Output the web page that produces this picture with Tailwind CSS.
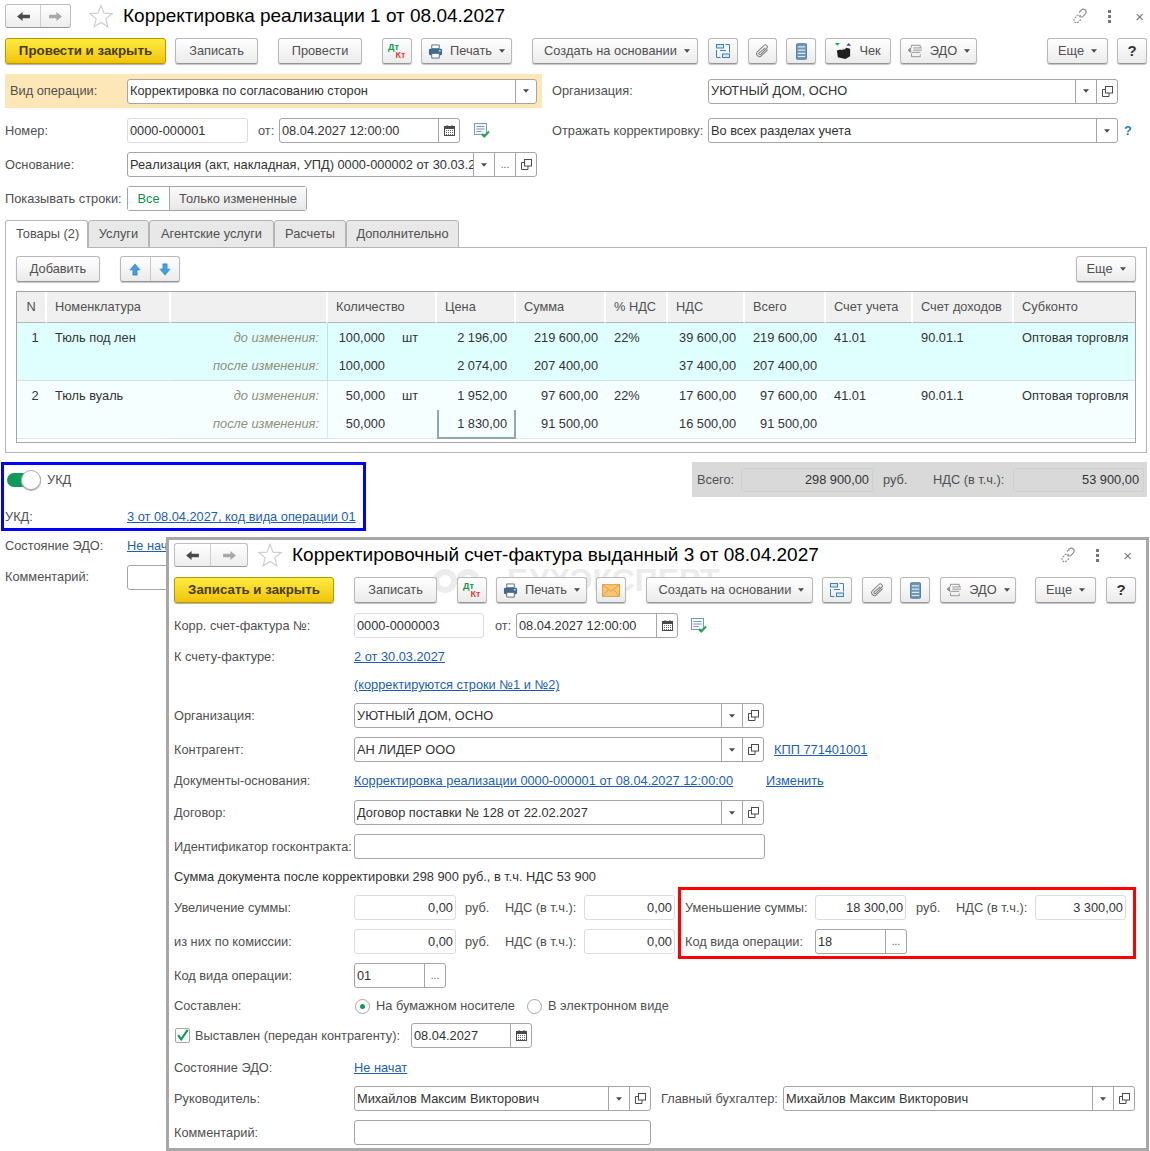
<!DOCTYPE html>
<html lang="ru">

<head>
    <meta charset="UTF-8">
    <meta name="viewport" content="width=device-width, initial-scale=1.0">
    <script src="https://cdn.jsdelivr.net/npm/@tailwindcss/browser@4"></script>
    <title>Корректировка реализации</title>
</head>

<body class="bg-white">
    <!-- icon sprite -->
    <svg class="hidden">
        <symbol id="back" viewBox="0 0 16 12"><path d="M1 6l6-5v3h8v4H7v3z" fill="#4a4a4a"/></symbol>
        <symbol id="forward" viewBox="0 0 16 12"><path d="M15 6L9 1v3H1v4h8v3z" fill="#a8a8a8"/></symbol>
        <symbol id="star" viewBox="0 0 24 24"><path d="M12 1.500l3 7.600 8.200.5-6.400 5.200 2.100 8-6.900-4.400-6.900 4.400 2.100-8L.8 9.600 9 9.100z" fill="#fff" stroke="#cfcfcf" stroke-width="1.200"/></symbol>
        <symbol id="printer" viewBox="0 0 16 16"><path d="M4 1h8v4H4z" fill="#fff" stroke="#4f6d86"/><rect x="1" y="5" width="14" height="7" rx="1.500" fill="#3f6a8c"/><path d="M4 10h8v5H4z" fill="#fff" stroke="#4f6d86"/><rect x="11.500" y="6.500" width="2" height="1.500" fill="#cfe0ec"/></symbol>
        <symbol id="struct" viewBox="0 0 16 16" fill="none" stroke="#3f83b5"><rect x="1.500" y="1.500" width="7" height="3.500" fill="#d7e8f4"/><rect x="7.500" y="11" width="7" height="3.500" fill="#d7e8f4"/><path d="M10.500 1.500h4v8M1.500 7v7.500h4M5 7.500h6"/></symbol>
        <symbol id="clip" viewBox="0 0 16 16" fill="none" stroke="#808080" stroke-width="1.100"><path d="M13.500 6L7 12.500a3 3 0 0 1-4.300-4.300L9.500 1.600a2.100 2.100 0 0 1 3 3L6 11a1 1 0 0 1-1.500-1.500L11 4"/></symbol>
        <symbol id="list" viewBox="0 0 12 18"><rect x=".5" y=".5" width="11" height="17" rx="1" fill="#6f97b8" stroke="#4f7697"/><path d="M2 4h8M2 7.500h8M2 11h8M2 14.500h8" stroke="#dbe8f2" stroke-width="1.200"/></symbol>
        <symbol id="cheque" viewBox="0 0 18 18"><path d="M0 0h5L2.500 3z" fill="#11a65a"/><path d="M12 3h5l-2.500-3z" fill="#3349a8"/><path d="M2 8l10-3 4 1v8l-5 3-8-2z" fill="#1f1f1f"/><path d="M5 6.500l5-1.500 2 1-5 1.500z" fill="#e8e8e8"/></symbol>
        <symbol id="edo" viewBox="0 0 18 16" fill="none" stroke="#8a8a8a"><path d="M5 1.500h10v3M5 1.500V4M5 11v3.500h10V12M7 4.500h10M7 7h10M5 9.500h10"/><path d="M1 7l3-2.500v5z" fill="#8a8a8a"/></symbol>
        <symbol id="mail" viewBox="0 0 20 14"><rect x=".5" y=".5" width="19" height="13" fill="#f7c673" stroke="#d99a3d"/><path d="M.5.5L10 8l9.500-7.500M.5 13.500l6.500-7.500M19.500 13.500L13 6" fill="none" stroke="#d99a3d"/></symbol>
        <symbol id="chain" viewBox="0 0 16 16" fill="none" stroke="#8c8c8c" stroke-width="1.100"><path d="M7 4.500l2.500-2.500c1.500-1.400 3.100-.7 3.800 0s1.300 2.400 0 3.800L11 8.300c-1.400 1.300-3 .8-3.800-.4"/><path d="M9 11.500L6.500 14c-1.500 1.400-3.100.7-3.800 0s-1.300-2.400 0-3.800L5 7.700c1.400-1.300 3-.8 3.800.4" stroke-dasharray="2 1"/></symbol>
        <symbol id="cal" viewBox="0 0 11 11"><rect x=".5" y="1.500" width="10" height="9" fill="#fff" stroke="#4a4a4a"/><rect x="1" y="2" width="9" height="2" fill="#4a4a4a"/><path d="M3 0v2M8 0v2" stroke="#4a4a4a"/><path d="M2 5.500h7M2 7.500h7M2 9.500h7" stroke="#6a6a6a" stroke-dasharray="1 1"/></symbol>
        <symbol id="open" viewBox="0 0 11 11" fill="none" stroke="#4a4a4a"><rect x="3.500" y=".5" width="7" height="6.500"/><path d="M3.500 3.500H.5v7h6.500V7"/></symbol>
        <symbol id="note" viewBox="0 0 16 15"><rect x=".5" y=".5" width="12" height="11" fill="#f3f7fa" stroke="#7f9bb0"/><path d="M2.500 3.500h8M2.500 6h8M2.500 8.500h5" stroke="#7f9bb0"/><path d="M8 11l2.200 2.500L15 8.500" fill="none" stroke="#22a34a" stroke-width="2"/></symbol>
        <symbol id="up" viewBox="0 0 13 15"><path d="M6.500 1L12.500 8H9v6H4V8H.5z" fill="#3f9fe0" stroke="#2f7db5" stroke-width=".6"/></symbol>
        <symbol id="down" viewBox="0 0 13 15"><path d="M6.500 14L12.500 7H9V1H4v6H.5z" fill="#3f9fe0" stroke="#2f7db5" stroke-width=".6"/></symbol>
        <symbol id="dd" viewBox="0 0 7 4"><path d="M0 0h7L3.500 4z" fill="#4a4a4a"/></symbol>
    </svg>

    <div class="relative w-[1150px] h-[1151px] overflow-hidden bg-white text-[12.8px] whitespace-nowrap text-[#505050] font-['Liberation_Sans',Arial,sans-serif]">

        <!-- Main document -->
        <div class="pt-[4px] pl-[5px]">
            <div class="flex items-center w-[1139px] h-[24px]">
                <div class="flex w-[66px] h-[24px] rounded-[3px] border border-[#bdbdbd] border-b-[#969696] bg-linear-to-b from-white to-[#ededed]">
                    <div class="flex-1 flex items-center justify-center border-r border-[#cfcfcf]"><svg class="w-[15px] h-[11px]"><use href="#back"/></svg></div>
                    <div class="w-[29px] flex items-center justify-center"><svg class="w-[15px] h-[11px]"><use href="#forward"/></svg></div>
                </div>
                <svg class="ml-[18px] w-[24px] h-[24px]"><use href="#star"/></svg>
                <h1 class="ml-[10px] text-[19px] leading-[24px] text-black">Корректировка реализации 1 от 08.04.2027</h1>
                <svg class="ml-auto w-[16px] h-[16px]"><use href="#chain"/></svg>
                <div class="ml-[20px] flex flex-col gap-[2px]"><i class="block w-[3px] h-[3px] bg-[#777]"></i><i class="block w-[3px] h-[3px] bg-[#777]"></i><i class="block w-[3px] h-[3px] bg-[#777]"></i></div>
                <span class="ml-[24px] text-[15px] leading-none text-[#777]">×</span>
            </div>

            <div class="flex mt-[10px] h-[26px]">
                <button class="w-[161px] rounded-[3px] border border-[#b59700] bg-linear-to-b from-[#ffec3d] to-[#f0c400] shadow-[0_1px_1px_#b0b0b0] text-[13.3px] font-bold text-[#4a3b00]">Провести и закрыть</button>
                <button class="ml-[9px] w-[83px] rounded-[3px] border border-[#b9b9b9] border-b-[#969696] bg-linear-to-b from-white to-[#ebebeb] shadow-[0_1px_1px_#c4c4c4]">Записать</button>
                <button class="ml-[20px] w-[84px] rounded-[3px] border border-[#b9b9b9] border-b-[#969696] bg-linear-to-b from-white to-[#ebebeb] shadow-[0_1px_1px_#c4c4c4]">Провести</button>
                <button class="ml-[20px] w-[30px] rounded-[3px] border border-[#b9b9b9] border-b-[#969696] bg-linear-to-b from-white to-[#ebebeb] shadow-[0_1px_1px_#c4c4c4] text-[9px] leading-[8px] font-bold"><span class="block pr-[7px] text-[#11984f]">Дт</span><span class="block pl-[7px] text-[#e04040]">Кт</span></button>
                <button class="ml-[9px] w-[91px] flex items-center justify-center gap-[7px] rounded-[3px] border border-[#b9b9b9] border-b-[#969696] bg-linear-to-b from-white to-[#ebebeb] shadow-[0_1px_1px_#c4c4c4]"><svg class="w-[15px] h-[15px]"><use href="#printer"/></svg>Печать<svg class="w-[6px] h-[4px]"><use href="#dd"/></svg></button>
                <button class="ml-[20px] w-[166px] pl-[4px] flex items-center justify-center gap-[7px] rounded-[3px] border border-[#b9b9b9] border-b-[#969696] bg-linear-to-b from-white to-[#ebebeb] shadow-[0_1px_1px_#c4c4c4]">Создать на основании<svg class="w-[6px] h-[4px]"><use href="#dd"/></svg></button>
                <button class="ml-[10px] w-[30px] flex items-center justify-center rounded-[3px] border border-[#b9b9b9] border-b-[#969696] bg-linear-to-b from-white to-[#ebebeb] shadow-[0_1px_1px_#c4c4c4]"><svg class="w-[16px] h-[16px]"><use href="#struct"/></svg></button>
                <button class="ml-[10px] w-[29px] flex items-center justify-center rounded-[3px] border border-[#b9b9b9] border-b-[#969696] bg-linear-to-b from-white to-[#ebebeb] shadow-[0_1px_1px_#c4c4c4]"><svg class="w-[15px] h-[15px]"><use href="#clip"/></svg></button>
                <button class="ml-[9px] w-[30px] flex items-center justify-center rounded-[3px] border border-[#b9b9b9] border-b-[#969696] bg-linear-to-b from-white to-[#ebebeb] shadow-[0_1px_1px_#c4c4c4]"><svg class="w-[11px] h-[17px]"><use href="#list"/></svg></button>
                <button class="ml-[9px] w-[66px] flex items-center justify-center gap-[7px] rounded-[3px] border border-[#b9b9b9] border-b-[#969696] bg-linear-to-b from-white to-[#ebebeb] shadow-[0_1px_1px_#c4c4c4]"><svg class="w-[17px] h-[17px]"><use href="#cheque"/></svg>Чек</button>
                <button class="ml-[9px] w-[77px] flex items-center justify-center gap-[7px] rounded-[3px] border border-[#b9b9b9] border-b-[#969696] bg-linear-to-b from-white to-[#ebebeb] shadow-[0_1px_1px_#c4c4c4]"><svg class="w-[16px] h-[14px]"><use href="#edo"/></svg>ЭДО<svg class="w-[6px] h-[4px]"><use href="#dd"/></svg></button>
                <button class="ml-[70px] w-[61px] flex items-center justify-center gap-[7px] rounded-[3px] border border-[#b9b9b9] border-b-[#969696] bg-linear-to-b from-white to-[#ebebeb] shadow-[0_1px_1px_#c4c4c4]">Еще<svg class="w-[6px] h-[4px]"><use href="#dd"/></svg></button>
                <button class="ml-[9px] w-[30px] rounded-[3px] border border-[#b9b9b9] border-b-[#969696] bg-linear-to-b from-white to-[#ebebeb] shadow-[0_1px_1px_#c4c4c4] text-[15px] font-bold text-[#333]">?</button>
            </div>

            <div class="flex items-center mt-[10px] h-[34px]">
                <div class="flex items-center w-[537px] h-[34px] bg-[#fde7b6] pl-[5px]">
                    <span class="w-[117px]">Вид операции:</span>
                    <div class="flex w-[410px] h-[25px] bg-white rounded-[3px] border border-[#a5a5a5]">
                        <input class="flex-1 min-w-0 pl-[2px] text-[#333]" value="Корректировка по согласованию сторон">
                        <span class="w-[21px] flex items-center justify-center border-l border-[#a5a5a5]"><svg class="w-[6px] h-[4px]"><use href="#dd"/></svg></span>
                    </div>
                </div>
                <span class="ml-[10px] w-[156px]">Организация:</span>
                <div class="flex w-[410px] h-[25px] rounded-[3px] border border-[#a5a5a5]">
                    <input class="flex-1 min-w-0 pl-[2px] text-[#333]" value="УЮТНЫЙ ДОМ, ОСНО">
                    <span class="w-[21px] flex items-center justify-center border-l border-[#a5a5a5]"><svg class="w-[6px] h-[4px]"><use href="#dd"/></svg></span>
                    <span class="w-[21px] flex items-center justify-center border-l border-[#a5a5a5]"><svg class="w-[11px] h-[11px]"><use href="#open"/></svg></span>
                </div>
            </div>

            <div class="flex items-center mt-[10px] h-[25px]">
                <span class="w-[122px]">Номер:</span>
                <input class="w-[121px] h-[25px] pl-[2px] rounded-[3px] border border-[#dcdcdc] text-[#333]" value="0000-000001">
                <span class="ml-[10px] w-[21px]">от:</span>
                <div class="flex w-[181px] h-[25px] rounded-[3px] border border-[#a5a5a5]">
                    <input class="flex-1 min-w-0 pl-[2px] text-[#333]" value="08.04.2027 12:00:00">
                    <span class="w-[21px] flex items-center justify-center border-l border-[#a5a5a5]"><svg class="w-[11px] h-[11px]"><use href="#cal"/></svg></span>
                </div>
                <svg class="ml-[14px] w-[16px] h-[15px]"><use href="#note"/></svg>
                <span class="ml-[62px] w-[156px]">Отражать корректировку:</span>
                <div class="flex w-[410px] h-[25px] rounded-[3px] border border-[#a5a5a5]">
                    <input class="flex-1 min-w-0 pl-[2px] text-[#333]" value="Во всех разделах учета">
                    <span class="w-[21px] flex items-center justify-center border-l border-[#a5a5a5]"><svg class="w-[6px] h-[4px]"><use href="#dd"/></svg></span>
                </div>
                <span class="ml-[6px] font-bold text-[#1a82c4]">?</span>
            </div>

            <div class="flex items-center mt-[9px] h-[25px]">
                <span class="w-[122px]">Основание:</span>
                <div class="flex w-[410px] h-[25px] rounded-[3px] border border-[#a5a5a5]">
                    <input class="flex-1 min-w-0 pl-[2px] text-[#333]" value="Реализация (акт, накладная, УПД) 0000-000002 от 30.03.2027">
                    <span class="w-[21px] flex items-center justify-center border-l border-[#a5a5a5]"><svg class="w-[6px] h-[4px]"><use href="#dd"/></svg></span>
                    <span class="w-[21px] flex items-center justify-center border-l border-[#a5a5a5] text-[10px]">...</span>
                    <span class="w-[21px] flex items-center justify-center border-l border-[#a5a5a5]"><svg class="w-[11px] h-[11px]"><use href="#open"/></svg></span>
                </div>
            </div>

            <div class="flex items-center mt-[9px] h-[25px]">
                <span class="w-[122px]">Показывать строки:</span>
                <div class="flex h-[25px] rounded-[3px] border border-[#a5a5a5]">
                    <span class="w-[42px] flex items-center justify-center bg-white text-[#0f9150] border-r border-[#a5a5a5]">Все</span>
                    <span class="w-[136px] flex items-center justify-center bg-linear-to-b from-[#fafafa] to-[#e8e8e8]">Только измененные</span>
                </div>
            </div>

            <!-- Tabs -->
            <div class="relative z-10 flex mt-[9px] h-[28px] -mb-px">
                <div class="w-[83px] pl-[10px] pb-[1px] flex items-center rounded-t-[3px] border border-b-0 border-[#b5b5b5] bg-white">Товары (2)</div>
                <div class="w-[61px] flex items-center justify-center rounded-t-[3px] border border-[#b5b5b5] bg-[#e8e8e8]">Услуги</div>
                <div class="w-[125px] flex items-center justify-center rounded-t-[3px] border border-[#b5b5b5] bg-[#e8e8e8]">Агентские услуги</div>
                <div class="w-[72px] flex items-center justify-center rounded-t-[3px] border border-[#b5b5b5] bg-[#e8e8e8]">Расчеты</div>
                <div class="w-[113px] flex items-center justify-center rounded-t-[3px] border border-[#b5b5b5] bg-[#e8e8e8]">Дополнительно</div>
            </div>
            <div class="w-[1142px] h-[206px] border border-[#b5b5b5] px-[10px] pt-[8px]">
                <div class="flex h-[26px]">
                    <button class="w-[84px] rounded-[3px] border border-[#b9b9b9] border-b-[#969696] bg-linear-to-b from-white to-[#ebebeb] shadow-[0_1px_1px_#c4c4c4]">Добавить</button>
                    <div class="ml-[20px] flex w-[60px] rounded-[3px] border border-[#b9b9b9] border-b-[#969696] bg-linear-to-b from-white to-[#ebebeb] shadow-[0_1px_1px_#c4c4c4]">
                        <span class="flex-1 flex items-center justify-center border-r border-[#c8c8c8]"><svg class="w-[12px] h-[13px]"><use href="#up"/></svg></span>
                        <span class="flex-1 flex items-center justify-center"><svg class="w-[12px] h-[13px]"><use href="#down"/></svg></span>
                    </div>
                    <button class="ml-auto w-[60px] flex items-center justify-center gap-[7px] rounded-[3px] border border-[#b9b9b9] border-b-[#969696] bg-linear-to-b from-white to-[#ebebeb] shadow-[0_1px_1px_#c4c4c4]">Еще<svg class="w-[6px] h-[4px]"><use href="#dd"/></svg></button>
                </div>

                <div class="mt-[9px] w-[1120px] h-[152px] border border-[#a5a5a5]">
                    <table class="w-[1118px] table-fixed border-separate border-spacing-0 text-[#333]">
                        <colgroup>
                            <col class="w-[30px]"><col class="w-[124px]"><col class="w-[157px]"><col class="w-[68px]"><col class="w-[41px]"><col class="w-[79px]"><col class="w-[90px]"><col class="w-[62px]"><col class="w-[77px]"><col class="w-[81px]"><col class="w-[87px]"><col class="w-[101px]"><col class="w-[121px]">
                        </colgroup>
                        <thead>
                            <tr class="h-[31px] bg-[#f0f0f0] text-[#505050] text-left">
                                <th class="font-normal text-center border-r-2 border-b border-white border-b-[#b5b5b5]">N</th>
                                <th class="font-normal pl-[8px] border-r-2 border-b border-white border-b-[#b5b5b5]">Номенклатура</th>
                                <th class="border-r-2 border-b border-white border-b-[#b5b5b5]"></th>
                                <th colspan="2" class="font-normal pl-[8px] border-r-2 border-b border-white border-b-[#b5b5b5]">Количество</th>
                                <th class="font-normal pl-[8px] border-r-2 border-b border-white border-b-[#b5b5b5]">Цена</th>
                                <th class="font-normal pl-[8px] border-r-2 border-b border-white border-b-[#b5b5b5]">Сумма</th>
                                <th class="font-normal pl-[8px] border-r-2 border-b border-white border-b-[#b5b5b5]">% НДС</th>
                                <th class="font-normal pl-[8px] border-r-2 border-b border-white border-b-[#b5b5b5]">НДС</th>
                                <th class="font-normal pl-[8px] border-r-2 border-b border-white border-b-[#b5b5b5]">Всего</th>
                                <th class="font-normal pl-[8px] border-r-2 border-b border-white border-b-[#b5b5b5]">Счет учета</th>
                                <th class="font-normal pl-[8px] border-r-2 border-b border-white border-b-[#b5b5b5]">Счет доходов</th>
                                <th class="font-normal pl-[8px] border-b border-b-[#b5b5b5]">Субконто</th>
                            </tr>
                        </thead>
                        <tbody>
                            <tr class="h-[29px] bg-[#dfffff]">
                                <td class="text-center pl-[6px]">1</td>
                                <td class="pl-[8px]">Тюль под лен</td>
                                <td class="pr-[8px] text-right italic text-[#8f8f78] border-r border-[#c4e0e0]">до изменения:</td>
                                <td class="pr-[11px] text-right">100,000</td>
                                <td class="pl-[6px]">шт</td>
                                <td class="pr-[9px] text-right">2 196,00</td>
                                <td class="pr-[8px] text-right">219 600,00</td>
                                <td class="pl-[8px]">22%</td>
                                <td class="pr-[9px] text-right">39 600,00</td>
                                <td class="pr-[9px] text-right">219 600,00</td>
                                <td class="pl-[8px]">41.01</td>
                                <td class="pl-[8px]">90.01.1</td>
                                <td class="pl-[8px]">Оптовая торговля</td>
                            </tr>
                            <tr class="h-[29px] bg-[#dfffff]">
                                <td class="border-b border-[#cfe6e6]"></td>
                                <td class="border-b border-[#cfe6e6]"></td>
                                <td class="pr-[8px] text-right italic text-[#8f8f78] border-r border-b border-[#c4e0e0]">после изменения:</td>
                                <td class="pr-[11px] text-right border-b border-[#cfe6e6]">100,000</td>
                                <td class="border-b border-[#cfe6e6]"></td>
                                <td class="pr-[9px] text-right border-b border-[#cfe6e6]">2 074,00</td>
                                <td class="pr-[8px] text-right border-b border-[#cfe6e6]">207 400,00</td>
                                <td class="border-b border-[#cfe6e6]"></td>
                                <td class="pr-[9px] text-right border-b border-[#cfe6e6]">37 400,00</td>
                                <td class="pr-[9px] text-right border-b border-[#cfe6e6]">207 400,00</td>
                                <td class="border-b border-[#cfe6e6]"></td>
                                <td class="border-b border-[#cfe6e6]"></td>
                                <td class="border-b border-[#cfe6e6]"></td>
                            </tr>
                            <tr class="h-[29px] bg-[#f5ffff]">
                                <td class="text-center pl-[6px]">2</td>
                                <td class="pl-[8px]">Тюль вуаль</td>
                                <td class="pr-[8px] text-right italic text-[#8f8f78] border-r border-[#d5e8e8]">до изменения:</td>
                                <td class="pr-[11px] text-right">50,000</td>
                                <td class="pl-[6px]">шт</td>
                                <td class="pr-[9px] text-right">1 952,00</td>
                                <td class="pr-[8px] text-right">97 600,00</td>
                                <td class="pl-[8px]">22%</td>
                                <td class="pr-[9px] text-right">17 600,00</td>
                                <td class="pr-[9px] text-right">97 600,00</td>
                                <td class="pl-[8px]">41.01</td>
                                <td class="pl-[8px]">90.01.1</td>
                                <td class="pl-[8px]">Оптовая торговля</td>
                            </tr>
                            <tr class="h-[29px] bg-[#f5ffff]">
                                <td class="border-b border-[#dde8e8]"></td>
                                <td class="border-b border-[#dde8e8]"></td>
                                <td class="pr-[8px] text-right italic text-[#8f8f78] border-r border-b border-[#d5e8e8]">после изменения:</td>
                                <td class="pr-[11px] text-right border-b border-[#dde8e8]">50,000</td>
                                <td class="border-b border-[#dde8e8]"></td>
                                <td class="pr-[7px] text-right border-x-2 border-b-2 border-[#8fa8a8]">1 830,00</td>
                                <td class="pr-[8px] text-right border-b border-[#dde8e8]">91 500,00</td>
                                <td class="border-b border-[#dde8e8]"></td>
                                <td class="pr-[9px] text-right border-b border-[#dde8e8]">16 500,00</td>
                                <td class="pr-[9px] text-right border-b border-[#dde8e8]">91 500,00</td>
                                <td class="border-b border-[#dde8e8]"></td>
                                <td class="border-b border-[#dde8e8]"></td>
                                <td class="border-b border-[#dde8e8]"></td>
                            </tr>
                        </tbody>
                    </table>
                </div>
            </div>

            <!-- Footer of main document -->
            <div class="flex mt-[9px]">
                <div class="w-[687px]">
                    <div class="flex items-center h-[34px] pl-[2px] pt-[1px]">
                        <div class="relative w-[34px] h-[14px] rounded-full bg-[#0f9a57]">
                            <span class="absolute right-0 top-[-3px] w-[20px] h-[20px] rounded-full bg-white border border-[#b0b0b0] shadow-[0_1px_1px_#aaa]"></span>
                        </div>
                        <span class="ml-[6px]">УКД</span>
                    </div>
                    <div class="flex items-center mt-[9px] h-[24px]">
                        <span class="w-[122px]">УКД:</span>
                        <a href="#" class="underline text-[#1c5fb4]">3 от 08.04.2027, код вида операции 01</a>
                    </div>
                    <div class="flex items-center mt-[5px] h-[24px]">
                        <span class="w-[122px]">Состояние ЭДО:</span>
                        <a href="#" class="underline text-[#1c5fb4]">Не начат</a>
                    </div>
                    <div class="flex items-center mt-[7px] h-[24px]">
                        <span class="w-[122px]">Комментарий:</span>
                        <input class="w-[300px] h-[25px] rounded-[3px] border border-[#a5a5a5]">
                    </div>
                </div>
                <div class="flex items-center w-[455px] h-[35px] pl-[5px] bg-[#d9d9d9]">
                    <span class="w-[44px]">Всего:</span>
                    <span class="w-[132px] h-[24px] flex items-center justify-end pr-[3px] rounded-[3px] border border-[#d0d0d0] text-[#333]">298 900,00</span>
                    <span class="ml-[10px] w-[50px]">руб.</span>
                    <span class="w-[80px]">НДС (в т.ч.):</span>
                    <span class="w-[131px] h-[24px] flex items-center justify-end pr-[4px] rounded-[3px] border border-[#d0d0d0] text-[#333]">53 900,00</span>
                </div>
            </div>
        </div>

        <!-- Highlight around the UKD block -->
        <div class="absolute left-[1px] top-[462px] w-[365px] h-[69px] border-[3px] border-[#0000ff]"></div>

        <!-- Corrective invoice window -->
        <div class="absolute left-[166px] top-[537px] w-[983px] h-[614px] border-[3px] border-[#a8a8a8] bg-white pt-[3px] pl-[5px]">

            <!-- Watermark behind the toolbar -->
            <div class="absolute left-[264px] top-[23px] flex items-center text-[32px] font-bold leading-none text-[#ececec]">
                <svg class="w-[48px] h-[34px]" viewBox="0 0 48 34" fill="none" stroke="#ececec" stroke-width="6"><circle cx="12" cy="18" r="9"/><circle cx="35" cy="18" r="9"/></svg>
                <span class="ml-[26px]">БУХЭКСПЕРТ</span>
            </div>

            <div class="relative flex items-center w-[958px] h-[24px]">
                <div class="flex w-[74px] h-[24px] rounded-[3px] border border-[#bdbdbd] border-b-[#969696] bg-linear-to-b from-white to-[#ededed]">
                    <div class="flex-1 flex items-center justify-center border-r border-[#cfcfcf]"><svg class="w-[15px] h-[11px]"><use href="#back"/></svg></div>
                    <div class="w-[36px] flex items-center justify-center"><svg class="w-[15px] h-[11px]"><use href="#forward"/></svg></div>
                </div>
                <svg class="ml-[10px] w-[24px] h-[24px]"><use href="#star"/></svg>
                <h2 class="ml-[10px] text-[19px] leading-[24px] text-black">Корректировочный счет-фактура выданный 3 от 08.04.2027</h2>
                <svg class="ml-auto w-[16px] h-[16px]"><use href="#chain"/></svg>
                <div class="ml-[20px] flex flex-col gap-[2px]"><i class="block w-[3px] h-[3px] bg-[#777]"></i><i class="block w-[3px] h-[3px] bg-[#777]"></i><i class="block w-[3px] h-[3px] bg-[#777]"></i></div>
                <span class="ml-[24px] text-[15px] leading-none text-[#777]">×</span>
            </div>

            <div class="relative flex mt-[10px] h-[26px]">
                <button class="w-[160px] rounded-[3px] border border-[#b59700] bg-linear-to-b from-[#ffec3d] to-[#f0c400] shadow-[0_1px_1px_#b0b0b0] text-[13.3px] font-bold text-[#4a3b00]">Записать и закрыть</button>
                <button class="ml-[20px] w-[83px] rounded-[3px] border border-[#b9b9b9] border-b-[#969696] bg-linear-to-b from-white to-[#ebebeb] shadow-[0_1px_1px_#c4c4c4]">Записать</button>
                <button class="ml-[20px] w-[30px] rounded-[3px] border border-[#b9b9b9] border-b-[#969696] bg-linear-to-b from-white to-[#ebebeb] shadow-[0_1px_1px_#c4c4c4] text-[9px] leading-[8px] font-bold"><span class="block pr-[7px] text-[#11984f]">Дт</span><span class="block pl-[7px] text-[#e04040]">Кт</span></button>
                <button class="ml-[9px] w-[91px] flex items-center justify-center gap-[7px] rounded-[3px] border border-[#b9b9b9] border-b-[#969696] bg-linear-to-b from-white to-[#ebebeb] shadow-[0_1px_1px_#c4c4c4]"><svg class="w-[15px] h-[15px]"><use href="#printer"/></svg>Печать<svg class="w-[6px] h-[4px]"><use href="#dd"/></svg></button>
                <button class="ml-[9px] w-[30px] flex items-center justify-center rounded-[3px] border border-[#b9b9b9] border-b-[#969696] bg-linear-to-b from-white to-[#ebebeb] shadow-[0_1px_1px_#c4c4c4]"><svg class="w-[18px] h-[13px]"><use href="#mail"/></svg></button>
                <button class="ml-[20px] w-[167px] pl-[4px] flex items-center justify-center gap-[7px] rounded-[3px] border border-[#b9b9b9] border-b-[#969696] bg-linear-to-b from-white to-[#ebebeb] shadow-[0_1px_1px_#c4c4c4]">Создать на основании<svg class="w-[6px] h-[4px]"><use href="#dd"/></svg></button>
                <button class="ml-[9px] w-[30px] flex items-center justify-center rounded-[3px] border border-[#b9b9b9] border-b-[#969696] bg-linear-to-b from-white to-[#ebebeb] shadow-[0_1px_1px_#c4c4c4]"><svg class="w-[16px] h-[16px]"><use href="#struct"/></svg></button>
                <button class="ml-[10px] w-[30px] flex items-center justify-center rounded-[3px] border border-[#b9b9b9] border-b-[#969696] bg-linear-to-b from-white to-[#ebebeb] shadow-[0_1px_1px_#c4c4c4]"><svg class="w-[15px] h-[15px]"><use href="#clip"/></svg></button>
                <button class="ml-[8px] w-[30px] flex items-center justify-center rounded-[3px] border border-[#b9b9b9] border-b-[#969696] bg-linear-to-b from-white to-[#ebebeb] shadow-[0_1px_1px_#c4c4c4]"><svg class="w-[11px] h-[17px]"><use href="#list"/></svg></button>
                <button class="ml-[10px] w-[76px] flex items-center justify-center gap-[7px] rounded-[3px] border border-[#b9b9b9] border-b-[#969696] bg-linear-to-b from-white to-[#ebebeb] shadow-[0_1px_1px_#c4c4c4]"><svg class="w-[16px] h-[14px]"><use href="#edo"/></svg>ЭДО<svg class="w-[6px] h-[4px]"><use href="#dd"/></svg></button>
                <button class="ml-[19px] w-[61px] flex items-center justify-center gap-[7px] rounded-[3px] border border-[#b9b9b9] border-b-[#969696] bg-linear-to-b from-white to-[#ebebeb] shadow-[0_1px_1px_#c4c4c4]">Еще<svg class="w-[6px] h-[4px]"><use href="#dd"/></svg></button>
                <button class="ml-[10px] w-[30px] rounded-[3px] border border-[#b9b9b9] border-b-[#969696] bg-linear-to-b from-white to-[#ebebeb] shadow-[0_1px_1px_#c4c4c4] text-[15px] font-bold text-[#333]">?</button>
            </div>

            <div class="flex items-center mt-[10px] h-[25px]">
                <span class="w-[180px]">Корр. счет-фактура №:</span>
                <input class="w-[130px] h-[25px] pl-[2px] rounded-[3px] border border-[#dcdcdc] text-[#333]" value="0000-0000003">
                <span class="ml-[11px] w-[21px]">от:</span>
                <div class="flex w-[162px] h-[25px] rounded-[3px] border border-[#a5a5a5]">
                    <input class="flex-1 min-w-0 pl-[2px] text-[#333]" value="08.04.2027 12:00:00">
                    <span class="w-[21px] flex items-center justify-center border-l border-[#a5a5a5]"><svg class="w-[11px] h-[11px]"><use href="#cal"/></svg></span>
                </div>
                <svg class="ml-[13px] w-[16px] h-[15px]"><use href="#note"/></svg>
            </div>

            <div class="flex items-center mt-[9px] h-[20px]">
                <span class="w-[180px]">К счету-фактуре:</span>
                <a href="#" class="underline text-[#1c5fb4]">2 от 30.03.2027</a>
            </div>
            <div class="flex items-center mt-[8px] h-[20px] pl-[180px]">
                <a href="#" class="underline text-[#1c5fb4]">(корректируются строки №1 и №2)</a>
            </div>

            <div class="flex items-center mt-[8px] h-[25px]">
                <span class="w-[180px]">Организация:</span>
                <div class="flex w-[410px] h-[25px] rounded-[3px] border border-[#a5a5a5]">
                    <input class="flex-1 min-w-0 pl-[2px] text-[#333]" value="УЮТНЫЙ ДОМ, ОСНО">
                    <span class="w-[21px] flex items-center justify-center border-l border-[#a5a5a5]"><svg class="w-[6px] h-[4px]"><use href="#dd"/></svg></span>
                    <span class="w-[21px] flex items-center justify-center border-l border-[#a5a5a5]"><svg class="w-[11px] h-[11px]"><use href="#open"/></svg></span>
                </div>
            </div>
            <div class="flex items-center mt-[9px] h-[25px]">
                <span class="w-[180px]">Контрагент:</span>
                <div class="flex w-[410px] h-[25px] rounded-[3px] border border-[#a5a5a5]">
                    <input class="flex-1 min-w-0 pl-[2px] text-[#333]" value="АН ЛИДЕР ООО">
                    <span class="w-[21px] flex items-center justify-center border-l border-[#a5a5a5]"><svg class="w-[6px] h-[4px]"><use href="#dd"/></svg></span>
                    <span class="w-[21px] flex items-center justify-center border-l border-[#a5a5a5]"><svg class="w-[11px] h-[11px]"><use href="#open"/></svg></span>
                </div>
                <a href="#" class="ml-[10px] underline text-[#1c5fb4]">КПП 771401001</a>
            </div>
            <div class="flex items-center mt-[9px] h-[20px]">
                <span class="w-[180px]">Документы-основания:</span>
                <a href="#" class="w-[412px] underline text-[#1c5fb4]">Корректировка реализации 0000-000001 от 08.04.2027 12:00:00</a>
                <a href="#" class="underline text-[#1c5fb4]">Изменить</a>
            </div>
            <div class="flex items-center mt-[9px] h-[25px]">
                <span class="w-[180px]">Договор:</span>
                <div class="flex w-[410px] h-[25px] rounded-[3px] border border-[#a5a5a5]">
                    <input class="flex-1 min-w-0 pl-[2px] text-[#333]" value="Договор поставки № 128 от 22.02.2027">
                    <span class="w-[21px] flex items-center justify-center border-l border-[#a5a5a5]"><svg class="w-[6px] h-[4px]"><use href="#dd"/></svg></span>
                    <span class="w-[21px] flex items-center justify-center border-l border-[#a5a5a5]"><svg class="w-[11px] h-[11px]"><use href="#open"/></svg></span>
                </div>
            </div>
            <div class="flex items-center mt-[9px] h-[25px]">
                <span class="w-[180px]">Идентификатор госконтракта:</span>
                <input class="w-[411px] h-[25px] rounded-[3px] border border-[#a5a5a5]">
            </div>
            <div class="flex items-center mt-[8px] h-[20px] text-[#333]">Сумма документа после корректировки 298 900 руб., в т.ч. НДС 53 900</div>

            <div class="flex items-center mt-[8px] h-[25px]">
                <span class="w-[180px]">Увеличение суммы:</span>
                <input class="w-[102px] h-[25px] pr-[2px] text-right rounded-[3px] border border-[#dcdcdc] text-[#333]" value="0,00">
                <span class="ml-[9px] w-[40px]">руб.</span>
                <span class="w-[79px]">НДС (в т.ч.):</span>
                <input class="w-[91px] h-[25px] pr-[2px] text-right rounded-[3px] border border-[#dcdcdc] text-[#333]" value="0,00">
                <span class="ml-[10px] w-[130px]">Уменьшение суммы:</span>
                <input class="w-[91px] h-[25px] pr-[2px] text-right rounded-[3px] border border-[#dcdcdc] text-[#333]" value="18 300,00">
                <span class="ml-[10px] w-[40px]">руб.</span>
                <span class="w-[79px]">НДС (в т.ч.):</span>
                <input class="w-[91px] h-[25px] pr-[2px] text-right rounded-[3px] border border-[#dcdcdc] text-[#333]" value="3 300,00">
            </div>
            <div class="flex items-center mt-[9px] h-[25px]">
                <span class="w-[180px]">из них по комиссии:</span>
                <input class="w-[102px] h-[25px] pr-[2px] text-right rounded-[3px] border border-[#dcdcdc] text-[#333]" value="0,00">
                <span class="ml-[9px] w-[40px]">руб.</span>
                <span class="w-[79px]">НДС (в т.ч.):</span>
                <input class="w-[91px] h-[25px] pr-[2px] text-right rounded-[3px] border border-[#dcdcdc] text-[#333]" value="0,00">
                <span class="ml-[10px] w-[130px]">Код вида операции:</span>
                <div class="flex w-[92px] h-[25px] rounded-[3px] border border-[#a5a5a5]">
                    <input class="flex-1 min-w-0 pl-[2px] text-[#333]" value="18">
                    <span class="w-[21px] flex items-center justify-center border-l border-[#a5a5a5] text-[10px]">...</span>
                </div>
            </div>
            <div class="flex items-center mt-[9px] h-[25px]">
                <span class="w-[180px]">Код вида операции:</span>
                <div class="flex w-[92px] h-[25px] rounded-[3px] border border-[#a5a5a5]">
                    <input class="flex-1 min-w-0 pl-[2px] text-[#333]" value="01">
                    <span class="w-[21px] flex items-center justify-center border-l border-[#a5a5a5] text-[10px]">...</span>
                </div>
            </div>
            <div class="flex items-center mt-[8px] h-[20px]">
                <span class="w-[181px]">Составлен:</span>
                <span class="w-[15px] h-[15px] flex items-center justify-center rounded-full border border-[#a5a5a5]"><i class="block w-[5px] h-[5px] rounded-full bg-[#0f9a57]"></i></span>
                <span class="ml-[6px] w-[151px]">На бумажном носителе</span>
                <span class="w-[15px] h-[15px] rounded-full border border-[#a5a5a5]"></span>
                <span class="ml-[6px]">В электронном виде</span>
            </div>
            <div class="flex items-center mt-[7px] h-[25px]">
                <span class="ml-[1px] w-[15px] h-[15px] flex items-center justify-center rounded-[2px] border border-[#a5a5a5]"><svg class="w-[15px] h-[15px]" viewBox="0 0 15 15"><path d="M2.500 7l3.500 5L13.500 1" fill="none" stroke="#0f9a57" stroke-width="2.400"/></svg></span>
                <span class="ml-[5px] w-[216px]">Выставлен (передан контрагенту):</span>
                <div class="flex w-[121px] h-[25px] rounded-[3px] border border-[#a5a5a5]">
                    <input class="flex-1 min-w-0 pl-[2px] text-[#333]" value="08.04.2027">
                    <span class="w-[21px] flex items-center justify-center border-l border-[#a5a5a5]"><svg class="w-[11px] h-[11px]"><use href="#cal"/></svg></span>
                </div>
            </div>
            <div class="flex items-center mt-[10px] h-[20px]">
                <span class="w-[180px]">Состояние ЭДО:</span>
                <a href="#" class="underline text-[#1c5fb4]">Не начат</a>
            </div>
            <div class="flex items-center mt-[8px] h-[25px]">
                <span class="w-[180px]">Руководитель:</span>
                <div class="flex w-[297px] h-[25px] rounded-[3px] border border-[#a5a5a5]">
                    <input class="flex-1 min-w-0 pl-[2px] text-[#333]" value="Михайлов Максим Викторович">
                    <span class="w-[21px] flex items-center justify-center border-l border-[#a5a5a5]"><svg class="w-[6px] h-[4px]"><use href="#dd"/></svg></span>
                    <span class="w-[21px] flex items-center justify-center border-l border-[#a5a5a5]"><svg class="w-[11px] h-[11px]"><use href="#open"/></svg></span>
                </div>
                <span class="ml-[10px] w-[122px]">Главный бухгалтер:</span>
                <div class="flex w-[352px] h-[25px] rounded-[3px] border border-[#a5a5a5]">
                    <input class="flex-1 min-w-0 pl-[2px] text-[#333]" value="Михайлов Максим Викторович">
                    <span class="w-[21px] flex items-center justify-center border-l border-[#a5a5a5]"><svg class="w-[6px] h-[4px]"><use href="#dd"/></svg></span>
                    <span class="w-[21px] flex items-center justify-center border-l border-[#a5a5a5]"><svg class="w-[11px] h-[11px]"><use href="#open"/></svg></span>
                </div>
            </div>
            <div class="flex items-center mt-[9px] h-[25px]">
                <span class="w-[180px]">Комментарий:</span>
                <input class="w-[297px] h-[25px] rounded-[3px] border border-[#a5a5a5]">
            </div>
        </div>

        <!-- Highlight around the decrease block -->
        <div class="absolute left-[678px] top-[887px] w-[458px] h-[72px] border-[3px] border-[#ff0000]"></div>
    </div>
</body>

</html>
